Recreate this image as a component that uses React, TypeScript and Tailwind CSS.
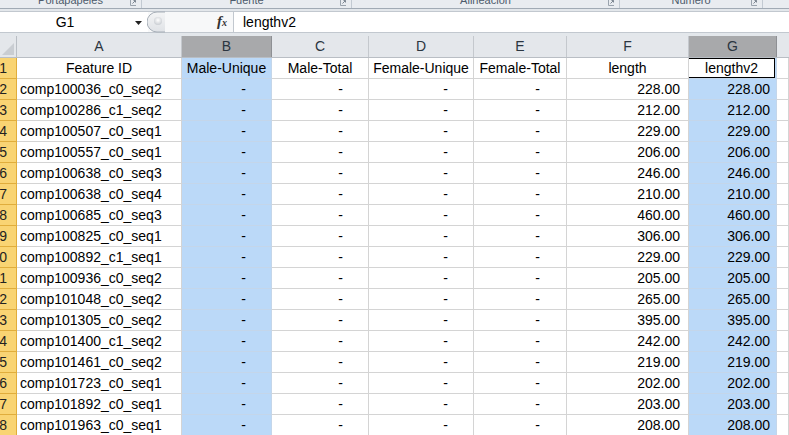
import React from "react";

const rows: [string, string][] = [
  ["comp100036_c0_seq2", "228.00"],
  ["comp100286_c1_seq2", "212.00"],
  ["comp100507_c0_seq1", "229.00"],
  ["comp100557_c0_seq1", "206.00"],
  ["comp100638_c0_seq3", "246.00"],
  ["comp100638_c0_seq4", "210.00"],
  ["comp100685_c0_seq3", "460.00"],
  ["comp100825_c0_seq1", "306.00"],
  ["comp100892_c1_seq1", "229.00"],
  ["comp100936_c0_seq2", "205.00"],
  ["comp101048_c0_seq2", "265.00"],
  ["comp101305_c0_seq2", "395.00"],
  ["comp101400_c1_seq2", "242.00"],
  ["comp101461_c0_seq2", "219.00"],
  ["comp101723_c0_seq1", "202.00"],
  ["comp101892_c0_seq1", "203.00"],
  ["comp101963_c0_seq1", "208.00"],
];

const Launcher = () => (
  <svg width="6" height="6" viewBox="0 0 6 6" className="absolute right-[5px] top-0">
    <path d="M0.5 0 V5.5 H6" fill="none" stroke="#9aa3ad" strokeWidth="1" />
    <path d="M2.5 3.5 L5.5 0.5 M3.5 0.5 H5.5 V2.5" fill="none" stroke="#7d8792" strokeWidth="1" />
  </svg>
);

const Group = ({ label, w }: { label: string; w: string }) => (
  <div className={`relative h-full ${w} shrink-0 border-r border-[#c3cad2] flex justify-center overflow-hidden`}>
    <span className="text-[11px] leading-[11px] -mt-[5px] text-[#4d5b6b]">{label}</span>
    <Launcher />
  </div>
);

const colLetters = ["A", "B", "C", "D", "E", "F", "G"];
const colW = ["w-[165px]", "w-[90px]", "w-[97px]", "w-[105px]", "w-[93px]", "w-[122px]", "w-[88px]"];

function RowHead({ n }: { n: number }) {
  return (
    <div className="w-[17px] shrink-0 h-full bg-[#f9d473] border-r border-b border-[#e0ad3c] flex justify-end pr-[9px] overflow-hidden items-center text-[#222]">
      <span className="whitespace-nowrap">{n}</span>
    </div>
  );
}

export default function App() {
  const cell = "shrink-0 h-full border-r border-b border-[#d4d4d4] flex items-center whitespace-nowrap overflow-hidden";
  const sel = "shrink-0 h-full border-r border-b border-[#c4d6ea] bg-[#bbd9f8] flex items-center whitespace-nowrap overflow-hidden";
  return (
    <div
      className="w-[789px] h-[435px] overflow-hidden bg-white text-[14px] text-black"
      style={{ fontFamily: '"Liberation Sans", Arial, sans-serif' }}
    >
      {/* ribbon strip */}
      <div className="h-[8px] bg-[#e9ecf0] flex">
        <Group label="Portapapeles" w="w-[142px]" />
        <Group label="Fuente" w="w-[210px]" />
        <Group label="Alineación" w="w-[268px]" />
        <Group label="Número" w="w-[143px]" />
        <div className="flex-1" />
      </div>
      {/* formula bar */}
      <div className="border-t border-[#a1aab4] bg-[#e3e7eb] pt-[2px] pb-[3px]">
        <div className="h-[22px] flex border-y border-[#c2c8cf] bg-white">
          <div className="w-[148px] shrink-0 relative flex items-center justify-center pr-[44px]">
            <span className="pl-[26px]">G1</span>
            <svg width="7" height="4" viewBox="0 0 7 4" className="absolute left-[135px] top-[9px]">
              <path d="M0 0 H7 L3.5 4 Z" fill="#222" />
            </svg>
          </div>
          <div className="w-[85px] shrink-0 flex items-center bg-[#f7f8f9] relative">
            <svg width="18" height="22" viewBox="0 0 18 22" className="-ml-[1px]">
              <defs>
                <linearGradient id="g1" x1="0" y1="0" x2="0" y2="1">
                  <stop offset="0" stopColor="#f4f5f6" />
                  <stop offset="1" stopColor="#dfe2e6" />
                </linearGradient>
                <radialGradient id="g2" cx="0.5" cy="0.4" r="0.6">
                  <stop offset="0" stopColor="#ffffff" />
                  <stop offset="1" stopColor="#c9cdd2" />
                </radialGradient>
              </defs>
              <path d="M18 1 H10 A10 10 0 0 0 10 21 H18" fill="url(#g1)" stroke="#a7afb8" strokeWidth="1" />
              <circle cx="11" cy="10" r="4" fill="url(#g2)" />
            </svg>
            <span
              className="absolute left-[69px] -top-[2px] leading-[22px] italic font-bold text-[15px] text-[#333]"
              style={{ fontFamily: '"Liberation Serif", "Times New Roman", serif' }}
            >
              f<span className="text-[10px] font-bold italic">x</span>
            </span>
          </div>
          <div className="flex-1 border-l border-[#c2c8cf] flex items-center pl-[9px]">lengthv2</div>
        </div>
      </div>
      {/* column headers */}
      <div className="h-[22px] flex bg-[#e4e7eb] border-b border-[#b9bec4] text-[#2b3540]">
        <div className="w-[17px] shrink-0 h-full border-r border-[#b9bec4] relative">
          <svg width="12" height="12" viewBox="0 0 12 12" className="absolute right-[2px] bottom-[2px]">
            <path d="M12 0 V12 H0 Z" fill="#c9cdd2" />
          </svg>
        </div>
        {colLetters.map((l, i) => {
          const selected = l === "B" || l === "G";
          return (
            <div
              key={l}
              className={`${colW[i]} shrink-0 h-full border-r flex items-center justify-center ${
                selected ? "bg-[#a8a9ab] border-[#8e9094]" : "border-[#c4c8cd]"
              }`}
            >
              {l}
            </div>
          );
        })}
        <div className="flex-1" />
      </div>
      {/* row 1 */}
      <div className="h-[21px] flex">
        <RowHead n={1} />
        <div className={`${cell} w-[165px] justify-center`}>Feature ID</div>
        <div className={`${sel} w-[90px] justify-center`}>Male-Unique</div>
        <div className={`${cell} w-[97px] justify-center`}>Male-Total</div>
        <div className={`${cell} w-[105px] justify-center`}>Female-Unique</div>
        <div className={`${cell} w-[93px] justify-center`}>Female-Total</div>
        <div className={`${cell} w-[122px] justify-center`}>length</div>
        <div className="w-[88px] shrink-0 h-full border-b border-r border-[#c4d6ea] bg-[#bbd9f8] p-0 overflow-hidden">
          <div className="h-[20px] bg-white border border-black flex items-center justify-center -ml-[1px] w-[87px]">
            lengthv2
          </div>
        </div>
        <div className={`${cell} flex-1`} />
      </div>
      {rows.map(([id, len], i) => (
        <div key={id} className="h-[21px] flex">
          <RowHead n={i + 2} />
          <div className={`${cell} w-[165px] pl-[3px]`}>{id}</div>
          <div className={`${sel} w-[90px] justify-end pr-[25px]`}>-</div>
          <div className={`${cell} w-[97px] justify-end pr-[25px]`}>-</div>
          <div className={`${cell} w-[105px] justify-end pr-[25px]`}>-</div>
          <div className={`${cell} w-[93px] justify-end pr-[26px]`}>-</div>
          <div className={`${cell} w-[122px] justify-end pr-[8px]`}>{len}</div>
          <div className={`${sel} w-[88px] justify-end pr-[6px]`}>{len}</div>
          <div className={`${cell} flex-1`} />
        </div>
      ))}
    </div>
  );
}
